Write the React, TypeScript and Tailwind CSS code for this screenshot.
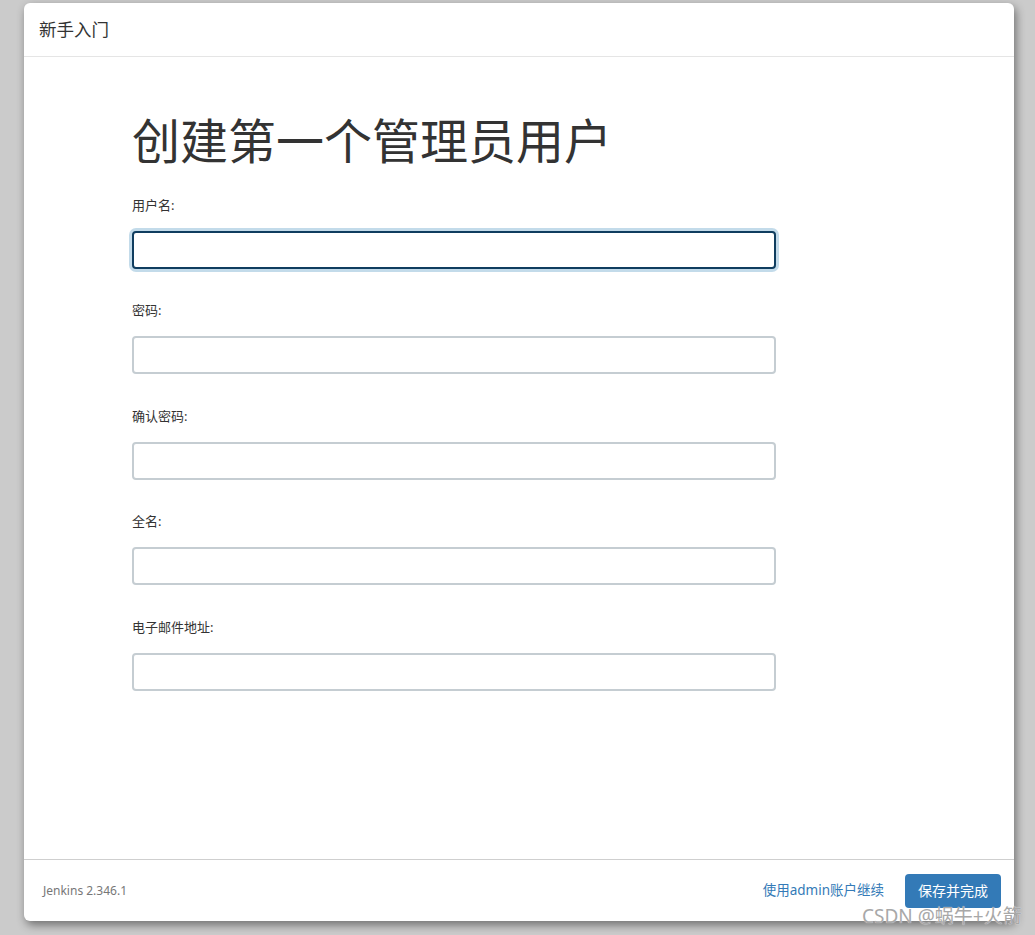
import React from 'react';

const fields = ['用户名:', '密码:', '确认密码:', '全名:', '电子邮件地址:'];

export default function App() {
  return (
    <div className="relative h-[935px] w-[1035px] overflow-hidden bg-[#cbcbcb] pl-[24px] pt-[3px] font-['Noto_Sans','Noto_Sans_CJK_SC',sans-serif] text-[#333]">
      {/* Setup wizard dialog */}
      <div className="flex h-[918px] w-[990px] flex-col rounded-[6px] bg-white shadow-[2px_4px_10px_rgba(0,0,0,0.45)]">
        <div className="flex h-[54px] items-center border-b border-[#e5e5e5] pl-[15px] text-[17.5px] leading-none text-[#333]">
          新手入门
        </div>

        <div className="flex-1 pl-[108px] pt-[58px]">
          <h1 className="mb-[28px] text-[48px] font-normal leading-[1.1] text-[#333]">创建第一个管理员用户</h1>
          {fields.map((f, i) => (
            <div key={f} className="mb-[32.5px]">
              <label className="mb-[16px] block text-[13px] leading-[19px]">{f}</label>
              <input
                className={`block h-[38px] w-[644px] rounded-[4px] border-2 bg-white px-3 text-[14px] outline-none ${
                  i === 0
                    ? 'border-[#0f3d5f] shadow-[0_0_0_3px_#c3dbea]'
                    : 'border-[#c5cdd2]'
                }`}
              />
            </div>
          ))}
        </div>

        <div className="flex h-[62px] items-center border-t border-[#cfcfcf] pl-[19px] pr-[13px]">
          <span className="text-[12px] text-[#777]">Jenkins 2.346.1</span>
          <div className="ml-auto flex items-center gap-[21px]">
            <a className="text-[13.5px] text-[#337ab7]">使用admin账户继续</a>
            <button className="h-[34px] rounded-[4px] bg-[#337ab7] px-[13px] text-[14px] text-white">保存并完成</button>
          </div>
        </div>
      </div>

      {/* watermark overlay */}
      <div className="absolute left-[862px] top-[904px] text-[19px] leading-[24px] text-[#a8a8a8] [text-shadow:0_0_1px_#fff]">
        CSDN @蜗牛+火箭
      </div>
    </div>
  );
}
